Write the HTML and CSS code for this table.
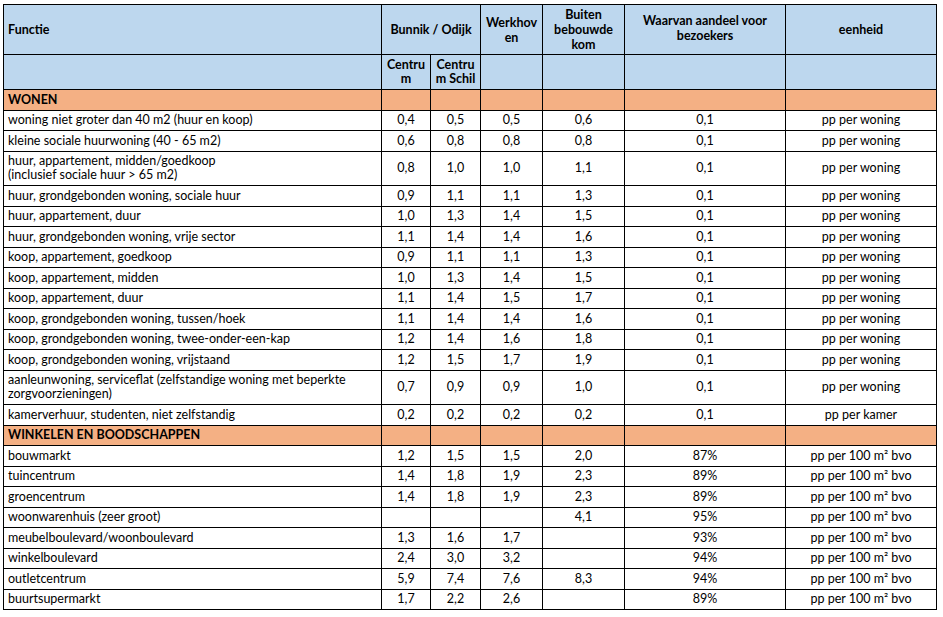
FILE: index.html
```html
<!DOCTYPE html>
<html lang="nl">
<head>
<meta charset="utf-8">
<title>Parkeernormen</title>
<link rel="stylesheet" href="styles.css">
</head>
<body>
<table class="norms">
  <colgroup>
    <col class="c-func">
    <col class="c-cent">
    <col class="c-schil">
    <col class="c-werk">
    <col class="c-buit">
    <col class="c-waar">
    <col class="c-eenh">
  </colgroup>
  <thead>
    <tr class="h1">
      <th class="left">Functie</th>
      <th colspan="2">Bunnik / Odijk</th>
      <th>Werkhov<br>en</th>
      <th>Buiten<br>bebouwde<br>kom</th>
      <th class="raise">Waarvan aandeel voor<br>bezoekers</th>
      <th>eenheid</th>
    </tr>
    <tr class="h2">
      <th></th>
      <th>Centru<br>m</th>
      <th>Centru<br>m Schil</th>
      <th></th>
      <th></th>
      <th></th>
      <th></th>
    </tr>
  </thead>
  <tbody>
    <tr class="cat"><td>WONEN</td><td></td><td></td><td></td><td></td><td></td><td></td></tr>
    <tr><td>woning niet groter dan 40 m2 (huur en koop)</td><td>0,4</td><td>0,5</td><td>0,5</td><td>0,6</td><td>0,1</td><td>pp per woning</td></tr>
    <tr><td>kleine sociale huurwoning (40 - 65 m2)</td><td>0,6</td><td>0,8</td><td>0,8</td><td>0,8</td><td>0,1</td><td>pp per woning</td></tr>
    <tr><td>huur, appartement, midden/goedkoop<br>(inclusief sociale huur &gt; 65 m2)</td><td>0,8</td><td>1,0</td><td>1,0</td><td>1,1</td><td>0,1</td><td>pp per woning</td></tr>
    <tr><td>huur, grondgebonden woning, sociale huur</td><td>0,9</td><td>1,1</td><td>1,1</td><td>1,3</td><td>0,1</td><td>pp per woning</td></tr>
    <tr><td>huur, appartement, duur</td><td>1,0</td><td>1,3</td><td>1,4</td><td>1,5</td><td>0,1</td><td>pp per woning</td></tr>
    <tr><td>huur, grondgebonden woning, vrije sector</td><td>1,1</td><td>1,4</td><td>1,4</td><td>1,6</td><td>0,1</td><td>pp per woning</td></tr>
    <tr><td>koop, appartement, goedkoop</td><td>0,9</td><td>1,1</td><td>1,1</td><td>1,3</td><td>0,1</td><td>pp per woning</td></tr>
    <tr><td>koop, appartement, midden</td><td>1,0</td><td>1,3</td><td>1,4</td><td>1,5</td><td>0,1</td><td>pp per woning</td></tr>
    <tr><td>koop, appartement, duur</td><td>1,1</td><td>1,4</td><td>1,5</td><td>1,7</td><td>0,1</td><td>pp per woning</td></tr>
    <tr><td>koop, grondgebonden woning, tussen/hoek</td><td>1,1</td><td>1,4</td><td>1,4</td><td>1,6</td><td>0,1</td><td>pp per woning</td></tr>
    <tr><td>koop, grondgebonden woning, twee-onder-een-kap</td><td>1,2</td><td>1,4</td><td>1,6</td><td>1,8</td><td>0,1</td><td>pp per woning</td></tr>
    <tr><td>koop, grondgebonden woning, vrijstaand</td><td>1,2</td><td>1,5</td><td>1,7</td><td>1,9</td><td>0,1</td><td>pp per woning</td></tr>
    <tr><td>aanleunwoning, serviceflat (zelfstandige woning met beperkte<br>zorgvoorzieningen)</td><td>0,7</td><td>0,9</td><td>0,9</td><td>1,0</td><td>0,1</td><td>pp per woning</td></tr>
    <tr><td>kamerverhuur, studenten, niet zelfstandig</td><td>0,2</td><td>0,2</td><td>0,2</td><td>0,2</td><td>0,1</td><td>pp per kamer</td></tr>
    <tr class="cat"><td>WINKELEN EN BOODSCHAPPEN</td><td></td><td></td><td></td><td></td><td></td><td></td></tr>
    <tr><td>bouwmarkt</td><td>1,2</td><td>1,5</td><td>1,5</td><td>2,0</td><td>87%</td><td>pp per 100 m² bvo</td></tr>
    <tr><td>tuincentrum</td><td>1,4</td><td>1,8</td><td>1,9</td><td>2,3</td><td>89%</td><td>pp per 100 m² bvo</td></tr>
    <tr><td>groencentrum</td><td>1,4</td><td>1,8</td><td>1,9</td><td>2,3</td><td>89%</td><td>pp per 100 m² bvo</td></tr>
    <tr><td>woonwarenhuis (zeer groot)</td><td></td><td></td><td></td><td>4,1</td><td>95%</td><td>pp per 100 m² bvo</td></tr>
    <tr><td>meubelboulevard/woonboulevard</td><td>1,3</td><td>1,6</td><td>1,7</td><td></td><td>93%</td><td>pp per 100 m² bvo</td></tr>
    <tr><td>winkelboulevard</td><td>2,4</td><td>3,0</td><td>3,2</td><td></td><td>94%</td><td>pp per 100 m² bvo</td></tr>
    <tr><td>outletcentrum</td><td>5,9</td><td>7,4</td><td>7,6</td><td>8,3</td><td>94%</td><td>pp per 100 m² bvo</td></tr>
    <tr><td>buurtsupermarkt</td><td>1,7</td><td>2,2</td><td>2,6</td><td></td><td>89%</td><td>pp per 100 m² bvo</td></tr>
  </tbody>
</table>
</body>
</html>
```

FILE: styles.css
```css
html, body {
  margin: 0;
  padding: 0;
  background: #ffffff;
}

body {
  padding: 4px 0 0 3px;
  font-family: Lato, "Open Sans", "Liberation Sans", sans-serif;
  font-size: 12.5px;
  color: #000000;
}

.norms {
  border-collapse: collapse;
  table-layout: fixed;
  width: 933px;
}

.c-func { width: 378px; }
.c-cent { width: 49px; }
.c-schil { width: 50px; }
.c-werk { width: 62px; }
.c-buit { width: 82px; }
.c-waar { width: 161px; }
.c-eenh { width: 151px; }

.norms th,
.norms td {
  border: 1px solid #000000;
  padding: 2.75px 4px;
  line-height: 14px;
  height: 14px;
  text-align: center;
  vertical-align: middle;
  white-space: nowrap;
  overflow: hidden;
}

.norms td:first-child {
  text-align: left;
}

.norms th {
  background: #bdd7ee;
  font-weight: 700;
}

.norms th.left {
  text-align: left;
}

.h1 th {
  height: 45px;
  line-height: 15px;
  padding-top: 2px;
  padding-bottom: 2px;
}

.h1 th.raise {
  height: 41px;
  padding-bottom: 6px;
}

.h2 th {
  height: 27px;
  padding-top: 3px;
  padding-bottom: 3px;
  line-height: 14px;
}

.cat td {
  background: #f4b084;
  font-weight: 700;
}
```
